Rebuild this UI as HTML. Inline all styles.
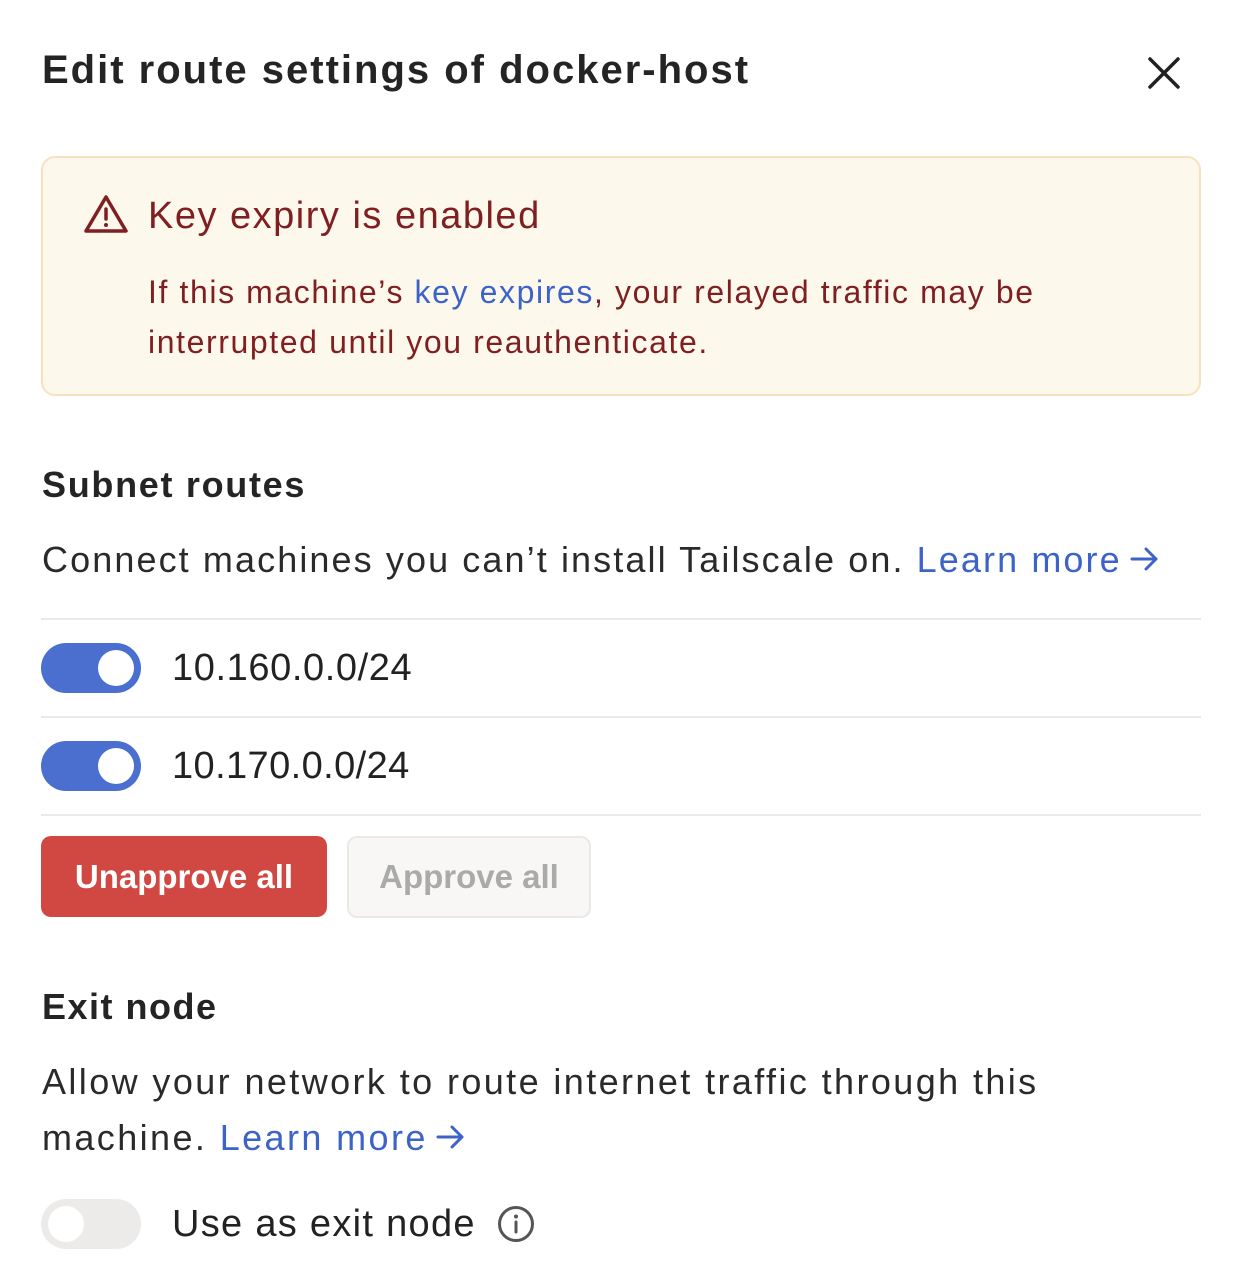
<!DOCTYPE html>
<html><head><meta charset="utf-8"><style>
body{margin:0;width:1244px;height:1280px;background:#fff;font-family:"Liberation Sans",sans-serif;color:#1f1f1f;position:relative;overflow:hidden}
.a{position:absolute;white-space:nowrap}
.tg{position:absolute;left:41px;width:100px;height:50px;border-radius:25px;background:#4a6fcf}
.tg::after{content:"";position:absolute;top:7px;left:57px;width:36px;height:36px;border-radius:50%;background:#fff}
.tg.off{background:#edeaea}.tg.off::after{left:7px}
.hr{position:absolute;left:41px;width:1160px;height:2px;background:#ece9e9}
.blue{color:#3d63c9}
.ar{display:inline-block;vertical-align:-2px;margin-left:4px}
</style></head><body>
<div class="a" style="left:42px;top:48px;font-size:40px;font-weight:bold;color:#242424;letter-spacing:2px">Edit route settings of docker-host</div>
<svg class="a" style="left:1146px;top:55px" width="36" height="36" viewBox="0 0 36 36"><path d="M4 4L32 32M32 4L4 32" stroke="#222" stroke-width="3.5" stroke-linecap="round"/></svg>
<div class="a" style="left:41px;top:156px;width:1156px;height:236px;background:#fdf8ec;border:2px solid #f8e2bd;border-radius:14px"></div>
<svg class="a" style="left:83px;top:194px" width="46" height="40" viewBox="0 0 46 40"><path d="M23 3L43 37H3Z" fill="none" stroke="#7f1f22" stroke-width="3.5" stroke-linejoin="round"/><path d="M23 15V25" stroke="#7f1f22" stroke-width="3.5" stroke-linecap="round"/><circle cx="23" cy="31" r="2" fill="#7f1f22"/></svg>
<div class="a" style="left:148px;top:195px;font-size:38px;color:#7f1f22;letter-spacing:1.5px">Key expiry is enabled</div>
<div class="a" style="left:148px;top:267px;font-size:32px;line-height:50px;color:#7f1f22;letter-spacing:1.6px">If this machine’s <span class="blue">key expires</span>, your relayed traffic may be<br>interrupted until you reauthenticate.</div>
<div class="a" style="left:42px;top:464px;font-size:36px;font-weight:bold;color:#242424;letter-spacing:1.7px">Subnet routes</div>
<div class="a" style="left:42px;top:539px;font-size:36px;color:#2a2a2a;letter-spacing:2.1px">Connect machines you can’t install Tailscale on. <span class="blue">Learn more</span><svg class="ar" width="36" height="30" viewBox="0 0 36 30"><path d="M6 15H30M20 5L30 15L20 25" fill="none" stroke="#3d63c9" stroke-width="3" stroke-linecap="round" stroke-linejoin="round"/></svg></div>
<div class="hr" style="top:618px"></div>
<div class="tg" style="top:643px"></div>
<div class="a" style="left:172px;top:647px;font-size:38px;color:#222;letter-spacing:0.6px">10.160.0.0/24</div>
<div class="hr" style="top:716px"></div>
<div class="tg" style="top:741px"></div>
<div class="a" style="left:172px;top:745px;font-size:38px;color:#222;letter-spacing:0.4px">10.170.0.0/24</div>
<div class="hr" style="top:814px"></div>
<div class="a" style="left:41px;top:836px;width:286px;height:81px;border-radius:10px;background:#d14843;color:#fff;font-size:33px;font-weight:bold;line-height:81px;text-align:center">Unapprove all</div>
<div class="a" style="left:347px;top:836px;width:240px;height:78px;border-radius:10px;background:#f8f7f6;border:2px solid #ebe8e6;color:#aaa;font-size:33px;font-weight:bold;line-height:78px;text-align:center">Approve all</div>
<div class="a" style="left:42px;top:986px;font-size:36px;font-weight:bold;color:#242424;letter-spacing:1.5px">Exit node</div>
<div class="a" style="left:42px;top:1054px;font-size:36px;line-height:56px;color:#2a2a2a;letter-spacing:2.4px">Allow your network to route internet traffic through this<br>machine. <span class="blue">Learn more</span><svg class="ar" width="36" height="30" viewBox="0 0 36 30"><path d="M6 15H30M20 5L30 15L20 25" fill="none" stroke="#3d63c9" stroke-width="3" stroke-linecap="round" stroke-linejoin="round"/></svg></div>
<div class="tg off" style="top:1199px"></div>
<div class="a" style="left:172px;top:1203px;font-size:38px;color:#222;letter-spacing:1.3px">Use as exit node</div>
<svg class="a" style="left:497px;top:1205px" width="38" height="38" viewBox="0 0 38 38"><circle cx="19" cy="19" r="16.5" fill="none" stroke="#555" stroke-width="3"/><path d="M19 17V27" stroke="#555" stroke-width="3" stroke-linecap="round"/><circle cx="19" cy="11.5" r="2" fill="#555"/></svg>
</body></html>
